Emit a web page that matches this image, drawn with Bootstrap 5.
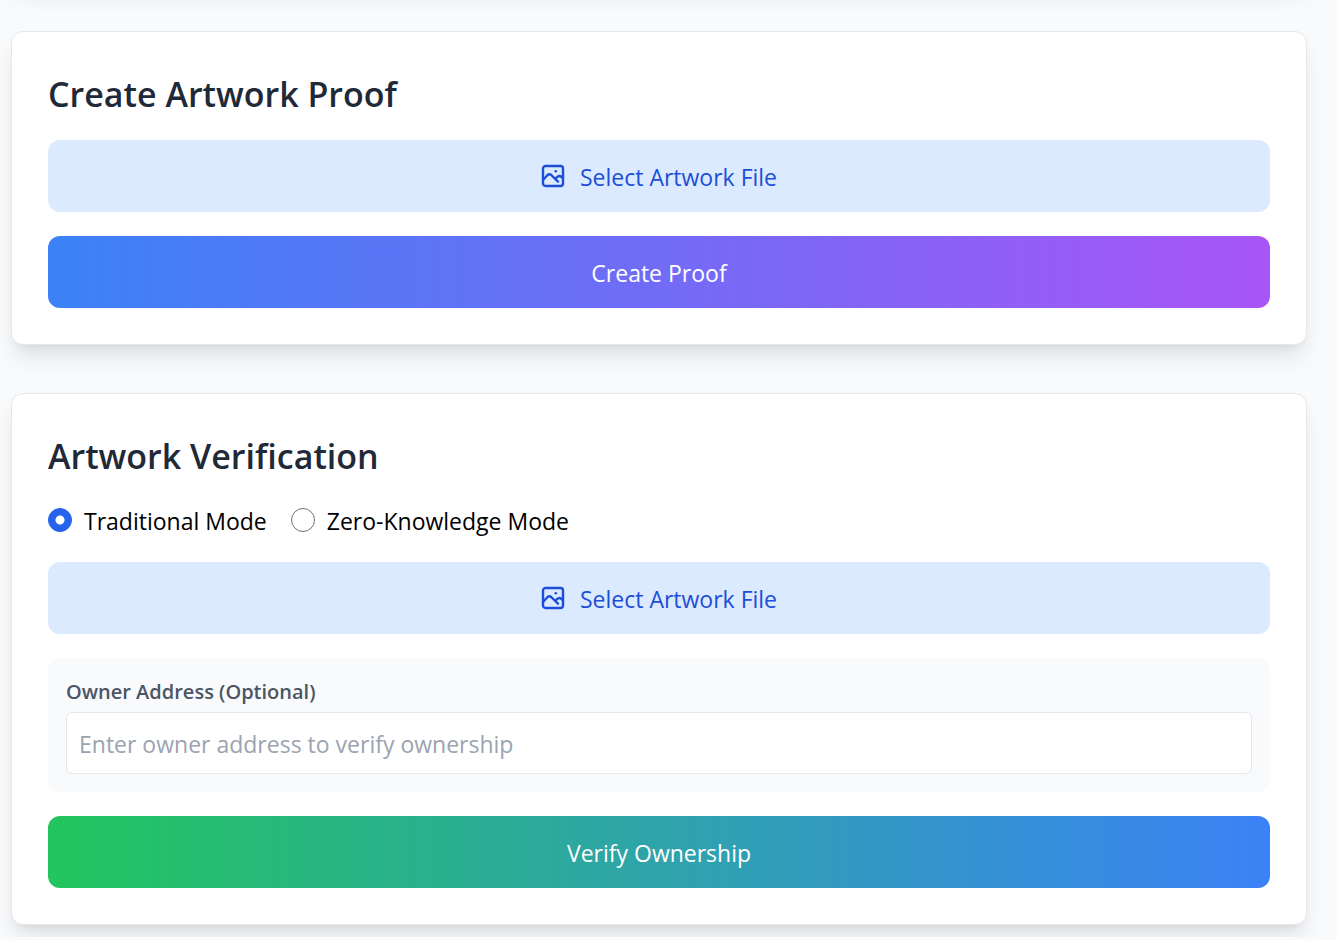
<!DOCTYPE html>
<html lang="en">
<head>
<meta charset="utf-8">
<meta name="viewport" content="width=device-width, initial-scale=1">
<title>Artwork Proof</title>
<link href="https://cdn.jsdelivr.net/npm/bootstrap@5.3.0/dist/css/bootstrap.min.css" rel="stylesheet">
<style>
  body { background: #f9fafb; color: #000; font-family: "Segoe UI", "Open Sans", "Noto Sans", sans-serif; font-size: 23px; line-height: 36px; overflow-x: hidden; }
  .page { padding: 0 30px 12px 11px; gap: 48px; }
  .panel, .page::before { background: #fff; border: 1px solid #e5e7eb; border-radius: 12px; box-shadow: 0 15px 22px -4px rgba(0,0,0,.1), 0 6px 9px -6px rgba(0,0,0,.1); }
  /* tail of the section scrolled off above */
  .page::before { content: ""; height: 40px; margin-top: -57px; }
  .panel { padding: 36px; }
  .panel-title { font-size: 34px; font-weight: 600; line-height: 52px; color: #1f2937; margin: 0 0 20px; }
  .stack { gap: 24px; }
  .action { height: 72px; border: 0; border-radius: 12px; font-size: 23px; line-height: 36px; color: #fff; padding: 2px 12px 0; }
  .action:hover { color: #fff; }
  .pick, .pick:hover { background: #dbeafe; color: #1d4ed8; gap: 15px; }
  .pick svg { width: 24px; height: 24px; margin-bottom: 2px; }
  .create, .create:hover { background: linear-gradient(to right, #3b82f6, #a855f7); }
  .verify, .verify:hover { background: linear-gradient(to right, #22c55e, #3b82f6); }
  .mode-option { gap: 12px; }
  .form-check-input.mode { width: 24px; height: 24px; margin: 0; float: none; border-color: #6b7280; }
  .form-check-input.mode:checked { background-color: #2563eb; border-color: #2563eb; background-image: radial-gradient(circle, #fff 4px, transparent 5px); }
  .modes label { padding-top: 2px; line-height: 34px; }
  .owner { background: #f9fafb; border-radius: 12px; padding: 18px; }
  .owner label { font-size: 20px; font-weight: 600; line-height: 32px; color: #4b5563; margin-bottom: 4px; }
  .owner input { height: 62px; font-size: 23px; padding: 2px 12px 0; border: 1px solid #e5e7eb; border-radius: 6px; }
  .owner input::placeholder { color: #9ca3af; }
</style>
</head>
<body>
<svg class="d-none" aria-hidden="true">
  <symbol id="picture" viewBox="0 0 24 24">
    <g fill="none" stroke="currentColor" stroke-width="2.4" stroke-linecap="round" stroke-linejoin="round">
      <rect x="2" y="2" width="20" height="20" rx="2.5"/>
      <path d="M2 16L6.6 11Q8.4 9.4 10.2 11L17 17.6"/>
      <path d="M14.5 14.4L16.4 12.8Q18.6 11 20.4 12.8L22 14.4"/>
    </g>
    <circle cx="14.8" cy="7.2" r="1.3" fill="currentColor"/>
  </symbol>
</svg>
<main class="page d-flex flex-column">
  <section class="panel">
    <h2 class="panel-title">Create Artwork Proof</h2>
    <div class="stack d-flex flex-column">
      <button type="button" class="btn action pick w-100 d-flex align-items-center justify-content-center"><svg aria-hidden="true"><use href="#picture"/></svg>Select Artwork File</button>
      <button type="button" class="btn action create w-100">Create Proof</button>
    </div>
  </section>
  <section class="panel">
    <h2 class="panel-title">Artwork Verification</h2>
    <form class="stack d-flex flex-column">
      <div class="modes d-flex flex-wrap stack">
        <div class="mode-option d-flex align-items-center"><input class="form-check-input mode" type="radio" name="mode" id="m1" checked><label for="m1">Traditional Mode</label></div>
        <div class="mode-option d-flex align-items-center"><input class="form-check-input mode" type="radio" name="mode" id="m2"><label for="m2">Zero-Knowledge Mode</label></div>
      </div>
      <button type="button" class="btn action pick w-100 d-flex align-items-center justify-content-center"><svg aria-hidden="true"><use href="#picture"/></svg>Select Artwork File</button>
      <div class="owner">
        <label class="d-block" for="owner">Owner Address (Optional)</label>
        <input class="form-control" id="owner" type="text" placeholder="Enter owner address to verify ownership">
      </div>
      <button type="button" class="btn action verify w-100">Verify Ownership</button>
    </form>
  </section>
</main>
<script src="https://cdn.jsdelivr.net/npm/bootstrap@5.3.0/dist/js/bootstrap.bundle.min.js"></script>
</body>
</html>
